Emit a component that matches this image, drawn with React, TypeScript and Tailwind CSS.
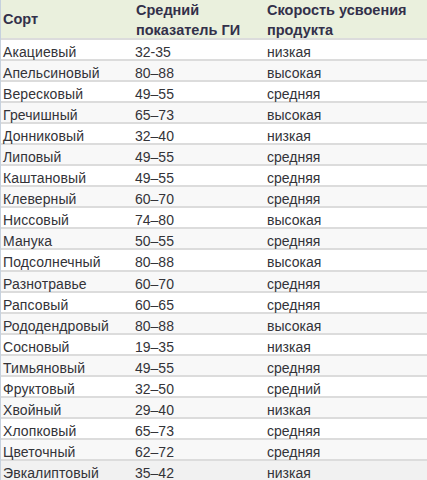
const rows: [string, string, string][] = [
  ["Акациевый", "32-35", "низкая"],
  ["Апельсиновый", "80–88", "высокая"],
  ["Вересковый", "49–55", "средняя"],
  ["Гречишный", "65–73", "высокая"],
  ["Донниковый", "32–40", "низкая"],
  ["Липовый", "49–55", "средняя"],
  ["Каштановый", "49–55", "средняя"],
  ["Клеверный", "60–70", "средняя"],
  ["Ниссовый", "74–80", "высокая"],
  ["Манука", "50–55", "средняя"],
  ["Подсолнечный", "80–88", "высокая"],
  ["Разнотравье", "60–70", "средняя"],
  ["Рапсовый", "60–65", "средняя"],
  ["Рододендровый", "80–88", "высокая"],
  ["Сосновый", "19–35", "низкая"],
  ["Тимьяновый", "49–55", "средняя"],
  ["Фруктовый", "32–50", "средний"],
  ["Хвойный", "29–40", "низкая"],
  ["Хлопковый", "65–73", "средняя"],
  ["Цветочный", "62–72", "средняя"],
  ["Эвкалиптовый", "35–42", "низкая"],
]

export default function App() {
  return (
    <div
      className="w-[427px] h-[480px] overflow-hidden bg-white border-l border-[#c6d1de] text-[14px] text-[#333338]"
      style={{ fontFamily: '"Liberation Sans", Arial, sans-serif' }}
    >
      {/* Header */}
      <div className="grid grid-cols-[132px_131px_1fr] h-[40px] bg-[#eaf0dd] font-bold text-[14.5px] text-[#33304a] leading-[20px] border-b-2 border-[#dcdcdc]">
        <div className="flex items-center pl-[2px] pb-[2px]">Сорт</div>
        <div className="pl-[3px]">
          Средний
          <br />
          показатель ГИ
        </div>
        <div className="pl-[3px]">
          Скорость усвоения
          <br />
          продукта
        </div>
      </div>

      {/* Body */}
      {rows.map(([name, gi, speed], i) => (
        <div
          key={name}
          className={
            "grid grid-cols-[132px_131px_1fr] h-[21.05px] items-center pt-[2px] border-b-2 border-[#dcdcdc] " +
            (i === rows.length - 1 ? "bg-[#f1f1f1]" : i % 2 === 0 ? "bg-white" : "bg-[#f8f8f8]")
          }
        >
          <div className="pl-[2px] tracking-[0.1px]">{name}</div>
          <div className="pl-[2px]">{gi}</div>
          <div className="pl-[3px]">{speed}</div>
        </div>
      ))}
    </div>
  )
}
